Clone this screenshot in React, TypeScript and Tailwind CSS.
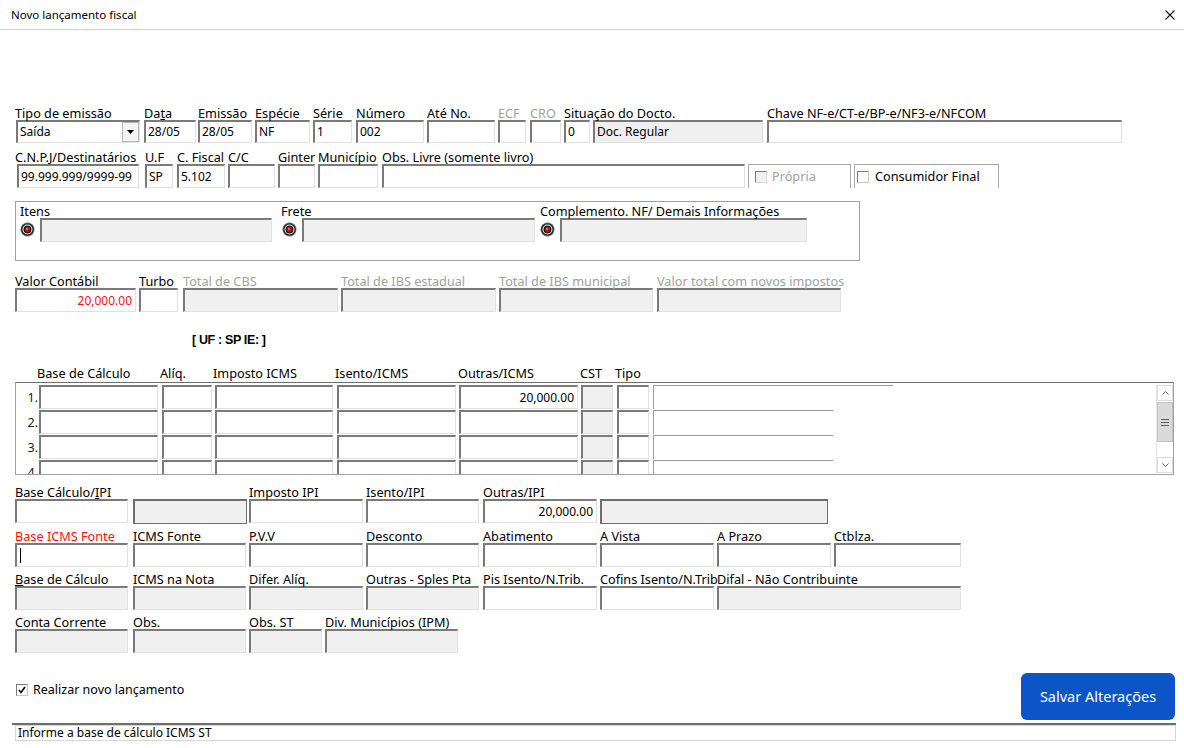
import type { ReactNode } from 'react';
import clsx from 'clsx';

// classic sunken edit box
const sunken =
  'border-t-2 border-l-2 border-r border-b border-t-[#7a7a7a] border-l-[#7a7a7a] border-r-[#e1e1e1] border-b-[#e1e1e1]';

const lbl = 'h-4 translate-y-[1px] whitespace-nowrap text-[12.7px] leading-4';

interface BoxProps {
  value?: ReactNode;
  gray?: boolean;
  right?: boolean;
  className?: string;
}

const Box = ({ value, gray, right, className }: BoxProps) => (
  <div
    className={clsx(
      sunken,
      'flex items-center overflow-hidden whitespace-nowrap leading-none',
      gray ? 'bg-[#f0f0f0]' : 'bg-white',
      right ? 'justify-end pr-[3px]' : 'pl-[2px]',
      className ?? 'h-6'
    )}
  >
    {value}
  </div>
);

interface FieldProps {
  label?: ReactNode;
  className: string;
  value?: ReactNode;
  gray?: boolean;
  right?: boolean;
  labelClass?: string;
  boxClass?: string;
}

const Field = ({ label, className, value, gray, right, labelClass, boxClass }: FieldProps) => (
  <div className={clsx('flex shrink-0 flex-col', className)}>
    <span className={clsx(lbl, labelClass)}>{label}</span>
    <Box value={value} gray={gray} right={right} className={boxClass} />
  </div>
);

const Target = ({ className }: { className?: string }) => (
  <svg width="15" height="15" viewBox="0 0 15 15" className={className}>
    <circle cx="7.5" cy="7.5" r="7" fill="#6a6a6a" />
    <circle cx="7.5" cy="7.5" r="6.1" fill="#101010" />
    <circle cx="7.5" cy="7.5" r="5" fill="#ffffff" />
    <circle cx="7.5" cy="7.5" r="4" fill="#111111" />
    <circle cx="7.5" cy="7.5" r="2.7" fill="#e00000" />
    <circle cx="6.9" cy="6.8" r="0.9" fill="#ff9a9a" />
  </svg>
);

const CheckBox = ({ checked, disabled }: { checked?: boolean; disabled?: boolean }) => (
  <div
    className={clsx(
      'flex h-[12px] w-[12px] shrink-0 items-center justify-center border border-t-[#7a7a7a] border-l-[#7a7a7a]',
      disabled
        ? 'border-r-[#d8d8d8] border-b-[#d8d8d8] bg-[#f0f0f0]'
        : 'border-r-[#c8c8c8] border-b-[#c8c8c8] bg-white'
    )}
  >
    {checked && (
      <svg width="8" height="8" viewBox="0 0 8 8">
        <path d="M1 4 L3 6.5 L7 1" fill="none" stroke="#000" strokeWidth="1.6" />
      </svg>
    )}
  </div>
);

const rows = [1, 2, 3, 4];

const App = () => {
  return (
    <div className="flex h-[748px] w-[1184px] flex-col overflow-hidden bg-white font-['Noto_Sans',sans-serif] text-[12px] text-black">
      {/* window title */}
      <div className="flex h-[30px] shrink-0 items-center justify-between border-b border-[#cfcfcf] pl-[11px] pr-[9px]">
        <span className="text-[11.5px]">Novo lançamento fiscal</span>
        <svg width="10" height="10" viewBox="0 0 10 10">
          <path d="M0.5 0.5 L9.5 9.5 M9.5 0.5 L0.5 9.5" stroke="#111" strokeWidth="1.1" />
        </svg>
      </div>

      {/* linha 1 */}
      <div className="mt-[74px] flex">
        <div className="ml-[16px] flex w-[124px] shrink-0 flex-col">
          <span className={clsx(lbl, '-ml-px')}>Tipo de emissão</span>
          <div className={clsx(sunken, 'flex h-[23px] items-center justify-between bg-white pl-[2px]')}>
            <span>Saída</span>
            <div className="flex h-full w-[17px] items-center justify-center border border-[#b4b4b4] bg-[#f4f4f4]">
              <svg width="7" height="4" viewBox="0 0 7 4">
                <path d="M0 0 H7 L3.5 4 Z" fill="#000" />
              </svg>
            </div>
          </div>
        </div>
        <Field
          className="ml-[4px] w-[52px]"
          label={
            <>
              Da<span className="underline">t</span>a
            </>
          }
          value="28/05"
          boxClass="h-[23px]"
        />
        <Field className="ml-[2px] w-[54px]" label="Emissão" value="28/05" boxClass="h-[23px]" />
        <Field className="ml-[3px] w-[55px]" label="Espécie" value="NF" boxClass="h-[23px]" />
        <Field className="ml-[3px] w-[39px]" label="Série" value="1" boxClass="h-[23px]" />
        <Field className="ml-[4px] w-[68px]" label="Número" value="002" boxClass="h-[23px]" />
        <Field className="ml-[3px] w-[68px]" label="Até No." boxClass="h-[23px]" />
        <Field className="ml-[3px] w-[28px]" label="ECF" labelClass="text-[#a0a0a0]" boxClass="h-[23px]" />
        <Field className="ml-[4px] w-[31px]" label="CRO" labelClass="text-[#a0a0a0]" boxClass="h-[23px]" />
        <div className="ml-[3px] flex shrink-0 flex-col">
          <span className={lbl}>Situação do Docto.</span>
          <div className="flex gap-[3px]">
            <Box value="0" className="h-[23px] w-[26px]" />
            <Box value="Doc. Regular" gray className="h-[23px] w-[170px]" />
          </div>
        </div>
        <Field className="ml-[4px] w-[355px]" label="Chave NF-e/CT-e/BP-e/NF3-e/NFCOM" boxClass="h-[23px]" />
      </div>

      {/* linha 2 */}
      <div className="mt-[5px] flex">
        <Field
          className="ml-[17px] w-[122px]"
          label="C.N.P.J/Destinatários"
          labelClass="-ml-[2px]"
          value="99.999.999/9999-99"
        />
        <Field className="ml-[6px] w-[28px]" label="U.F" value="SP" />
        <Field className="ml-[4px] w-[48px]" label="C. Fiscal" value="5.102" />
        <Field className="ml-[3px] w-[47px]" label="C/C" />
        <Field className="ml-[3px] w-[37px]" label="Ginter" />
        <Field className="ml-[3px] w-[60px]" label="Município" />
        <Field className="ml-[4px] w-[363px]" label="Obs. Livre (somente livro)" />
        <div className="ml-[3px] mt-4 flex h-6 w-[103px] shrink-0 items-center gap-[5px] border-t border-l border-r border-[#a8a8a8] pl-[6px]">
          <CheckBox disabled />
          <span className="text-[12.7px] text-[#a0a0a0]">Própria</span>
        </div>
        <div className="ml-[3px] mt-4 flex h-6 w-[145px] shrink-0 items-center gap-[6px] border-t border-l border-r border-[#a8a8a8] pl-[2px]">
          <CheckBox />
          <span className="text-[12.7px]">Consumidor Final</span>
        </div>
      </div>

      {/* informações complementares */}
      <div className="ml-[15px] mt-[13px] flex h-[60px] w-[845px] shrink-0 border border-[#a0a0a0] pl-[4px]">
        <div className="flex flex-col">
          <span className={lbl}>Itens</span>
          <div className="flex items-start">
            <Target className="mt-[4px]" />
            <Box gray className="ml-[5px] h-6 w-[232px]" />
          </div>
        </div>
        <div className="ml-[9px] flex flex-col">
          <span className={lbl}>Frete</span>
          <div className="flex items-start">
            <Target className="ml-px mt-[4px]" />
            <Box gray className="ml-[5px] h-6 w-[233px]" />
          </div>
        </div>
        <div className="ml-[5px] flex flex-col">
          <span className={lbl}>Complemento. NF/ Demais Informações</span>
          <div className="flex items-start">
            <Target className="mt-[4px]" />
            <Box gray className="ml-[5px] h-6 w-[247px]" />
          </div>
        </div>
      </div>

      {/* valores */}
      <div className="mt-[11px] flex">
        <Field
          className="ml-[15px] w-[121px]"
          label="Valor Contábil"
          value={<span className="text-[#ff1010]">20,000.00</span>}
          right
        />
        <Field className="ml-[3px] w-[39px]" label="Turbo" />
        <Field className="ml-[5px] w-[155px]" label="Total de CBS" labelClass="text-[#a0a0a0]" gray />
        <Field className="ml-[3px] w-[155px]" label="Total de IBS estadual" labelClass="text-[#a0a0a0]" gray />
        <Field className="ml-[3px] w-[154px]" label="Total de IBS municipal" labelClass="text-[#a0a0a0]" gray />
        <Field
          className="ml-[4px] w-[184px]"
          label="Valor total com novos impostos"
          labelClass="text-[#a0a0a0]"
          gray
        />
      </div>

      <div className="ml-[192px] mt-[21px] h-[14px] font-['Liberation_Sans',sans-serif] text-[12.5px] font-bold leading-[14px] tracking-[-0.35px]">
        [ UF : SP IE: ]
      </div>

      {/* grade ICMS */}
      <div className="ml-[39px] mt-[18px] flex h-[17px] text-[12.7px] leading-[17px]">
        <span className="-ml-[2px] w-[121px] shrink-0">Base de Cálculo</span>
        <span className="ml-[4px] w-[50px] shrink-0 -translate-x-[2px]">Alíq.</span>
        <span className="ml-[3px] w-[118px] shrink-0 -translate-x-[2px]">Imposto ICMS</span>
        <span className="ml-[4px] w-[119px] shrink-0 -translate-x-[2px]">Isento/ICMS</span>
        <span className="ml-[3px] w-[119px] shrink-0 -translate-x-[1px]">Outras/ICMS</span>
        <span className="ml-[3px] w-[32px] shrink-0 -translate-x-[1px]">CST</span>
        <span className="ml-[4px] w-[32px] shrink-0 -translate-x-[2px]">Tipo</span>
      </div>
      <div className="ml-[15px] flex h-[93px] w-[1159px] shrink-0 border border-[#a0a0a0] border-t-[#6e6e6e]">
        <div className="flex flex-1 flex-col gap-[1px] overflow-hidden pt-[2px]">
          {rows.map((n) => (
            <div key={n} className="flex h-6 shrink-0">
              <span className="w-[23px] shrink-0 pr-px pt-[5px] text-right text-[12.5px] leading-4 text-[#222]">
                {n}.
              </span>
              <Box className="h-6 w-[119px] shrink-0" />
              <Box className="ml-[4px] h-6 w-[50px] shrink-0" />
              <Box className="ml-[3px] h-6 w-[118px] shrink-0" />
              <Box className="ml-[4px] h-6 w-[119px] shrink-0" />
              <Box className="ml-[3px] h-6 w-[119px] shrink-0" right value={n === 1 ? '20,000.00' : undefined} />
              <Box className="ml-[3px] h-6 w-[32px] shrink-0" gray />
              <Box className="ml-[4px] h-6 w-[32px] shrink-0" />
              <div
                className={clsx(
                  'ml-[4px] h-6 shrink-0 border-t border-l border-[#9a9a9a]',
                  n === 1 ? 'w-[240px]' : 'w-[180px]'
                )}
              />
            </div>
          ))}
        </div>
        <div className="mt-[2px] mb-px flex w-[17px] shrink-0 flex-col border-l border-[#e6e6e6]">
          <div className="flex h-[16px] items-center justify-center border border-[#dcdcdc]">
            <svg width="7" height="4" viewBox="0 0 7 4">
              <path d="M0.5 3.5 L3.5 0.5 L6.5 3.5" fill="none" stroke="#606060" />
            </svg>
          </div>
          <div className="mt-px flex h-[40px] items-center justify-center border border-[#c2c2c2] bg-[#dadada]">
            <svg width="8" height="7" viewBox="0 0 8 7">
              <path d="M0 0.5 H8 M0 3.5 H8 M0 6.5 H8" stroke="#606060" />
            </svg>
          </div>
          <div className="flex-1" />
          <div className="flex h-[16px] items-center justify-center border border-[#dcdcdc]">
            <svg width="7" height="4" viewBox="0 0 7 4">
              <path d="M0.5 0.5 L3.5 3.5 L6.5 0.5" fill="none" stroke="#606060" />
            </svg>
          </div>
        </div>
      </div>

      {/* IPI / ST */}
      <div className="ml-[15px] mt-[8px] flex flex-col gap-[3px]">
        <div className="flex">
          <Field
            className="w-[113px]"
            label={
              <>
                Base Cálculo/<span className="underline">I</span>PI
              </>
            }
          />
          <div className="ml-[5px] flex w-[114px] shrink-0 flex-col">
            <span className="h-4" />
            <div className="h-[25px] border border-t-2 border-l-2 border-[#6e6e6e] bg-[#f0f0f0]" />
          </div>
          <Field className="ml-[2px] w-[114px]" label="Imposto IPI" />
          <Field className="ml-[3px] w-[113px]" label="Isento/IPI" />
          <Field className="ml-[4px] w-[114px]" label="Outras/IPI" value="20,000.00" right />
          <div className="ml-[3px] flex w-[228px] shrink-0 flex-col">
            <span className="h-4" />
            <div className="h-[25px] border border-t-2 border-l-2 border-[#6e6e6e] bg-[#f0f0f0]" />
          </div>
        </div>
        <div className="flex">
          <Field
            className="w-[113px]"
            label="Base ICMS Fonte"
            labelClass="text-[#ff1010]"
            value={<span className="ml-px block h-[15px] w-px bg-black" />}
          />
          <Field className="ml-[5px] w-[113px]" label="ICMS Fonte" />
          <Field className="ml-[3px] w-[114px]" label="P.V.V" />
          <Field className="ml-[3px] w-[113px]" label="Desconto" />
          <Field className="ml-[4px] w-[114px]" label="Abatimento" />
          <Field className="ml-[3px] w-[114px]" label="A Vista" />
          <Field className="ml-[3px] w-[114px]" label="A Prazo" />
          <Field className="ml-[3px] w-[127px]" label="Ctblza." />
        </div>
        <div className="flex">
          <Field
            className="w-[113px]"
            label={
              <>
                <span className="underline">B</span>ase de Cálculo
              </>
            }
            gray
          />
          <Field className="ml-[5px] w-[113px]" label="ICMS na Nota" gray />
          <Field className="ml-[3px] w-[114px]" label="Difer. Alíq." gray />
          <Field className="ml-[3px] w-[113px]" label="Outras - Sples Pta" gray />
          <Field className="ml-[4px] w-[114px]" label="Pis Isento/N.Trib." />
          <Field className="ml-[3px] w-[114px]" label="Cofins Isento/N.Trib" />
          <Field className="ml-[3px] w-[244px]" label="Difal - Não Contribuinte" gray />
        </div>
        <div className="flex">
          <Field className="w-[113px]" label="Conta Corrente" gray />
          <Field className="ml-[5px] w-[113px]" label="Obs." gray />
          <Field className="ml-[3px] w-[73px]" label="Obs. ST" gray />
          <Field className="ml-[3px] w-[133px]" label="Div. Municípios (IPM)" gray />
        </div>
      </div>

      {/* rodapé */}
      <div className="mt-[20px] flex items-start justify-between">
        <div className="ml-[16px] mt-[9px] flex items-center gap-[5px]">
          <CheckBox checked />
          <span className="text-[12.5px] leading-4">Realizar novo lançamento</span>
        </div>
        <button className="mr-[9px] flex h-[47px] w-[154px] items-center justify-center rounded-md bg-[#0b55c9] text-[14.5px] text-white">
          Salvar Alterações
        </button>
      </div>
      <div className="ml-[12px] mt-[3px] w-[1164px] border-t-2 border-[#6e6e6e] pl-[3px]">
        <div className="flex h-[16px] items-center border border-[#d6d6d6] pl-[2px] leading-none">
          Informe a base de cálculo ICMS ST
        </div>
      </div>
    </div>
  );
};

export default App;
